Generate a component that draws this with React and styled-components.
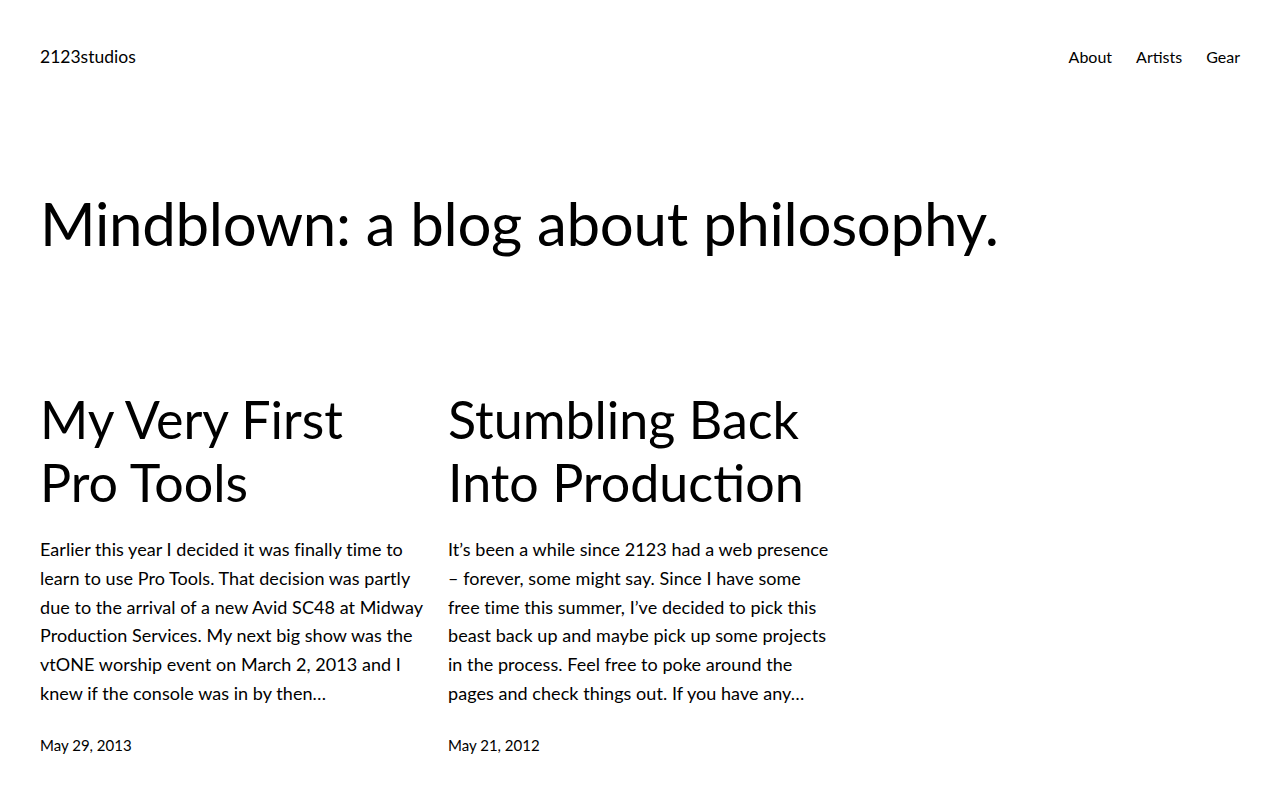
import React from 'react';
import styled, { createGlobalStyle } from 'styled-components';

const GlobalStyle = createGlobalStyle`
  html, body {
    margin: 0;
    padding: 0;
    background: #ffffff;
  }
  body {
    font-family: 'Lato', 'Open Sans', sans-serif;
    color: #000000;
    -webkit-font-smoothing: antialiased;
  }
`;

const posts = [
  {
    id: 1,
    title: 'My Very First Pro Tools',
    excerpt:
      'Earlier this year I decided it was finally time to learn to use Pro Tools. That decision was partly due to the arrival of a new Avid SC48 at Midway Production Services. My next big show was the vtONE worship event on March 2, 2013 and I knew if the console was in by then…',
    date: 'May 29, 2013'
  },
  {
    id: 2,
    title: 'Stumbling Back Into Production',
    excerpt:
      'It’s been a while since 2123 had a web presence – forever, some might say. Since I have some free time this summer, I’ve decided to pick this beast back up and maybe pick up some projects in the process. Feel free to poke around the pages and check things out. If you have any…',
    date: 'May 21, 2012'
  }
];

const App = () => (
  <>
    <GlobalStyle />
    <Page>
      <Header>
        <SiteTitle href="#">2123studios</SiteTitle>
        <Nav>
          <NavLink href="#">About</NavLink>
          <NavLink href="#">Artists</NavLink>
          <NavLink href="#">Gear</NavLink>
        </Nav>
      </Header>

      <Main>
        <PageHeading>Mindblown: a blog about philosophy.</PageHeading>

        <PostGrid>
          {posts.map((post) => (
            <Post key={post.id}>
              <PostTitle>{post.title}</PostTitle>
              <Excerpt>{post.excerpt}</Excerpt>
              <PostDate>{post.date}</PostDate>
            </Post>
          ))}
        </PostGrid>
      </Main>
    </Page>
  </>
);

const Page = styled.div`
  padding: 0 40px;
`;

const Header = styled.header`
  display: flex;
  justify-content: space-between;
  align-items: center;
  padding-top: 43px;
  height: 28px;
`;

const SiteTitle = styled.a`
  font-size: 17.5px;
  line-height: 28px;
  color: #000;
  text-decoration: none;
`;

const Nav = styled.nav`
  display: flex;
  gap: 24px;
`;

const NavLink = styled.a`
  font-size: 16px;
  line-height: 28px;
  color: #000;
  text-decoration: none;
`;

const Main = styled.main`
  padding-top: 116px;
`;

const PageHeading = styled.h1`
  margin: 0;
  font-size: 60px;
  font-weight: 400;
  line-height: 72px;
  letter-spacing: -0.3px;
`;

const PostGrid = styled.div`
  display: grid;
  grid-template-columns: repeat(3, 1fr);
  gap: 24px;
  margin-top: 129px;
`;

const Post = styled.article`
  display: flex;
  flex-direction: column;
`;

const PostTitle = styled.h2`
  margin: 0;
  font-size: 52px;
  font-weight: 400;
  line-height: 62.5px;
`;

const Excerpt = styled.p`
  margin: 22px 0 0;
  font-size: 18px;
  line-height: 28.8px;
  letter-spacing: 0.05px;
`;

const PostDate = styled.time`
  margin-top: 25px;
  font-size: 15px;
  line-height: 24px;
`;

export default App;
